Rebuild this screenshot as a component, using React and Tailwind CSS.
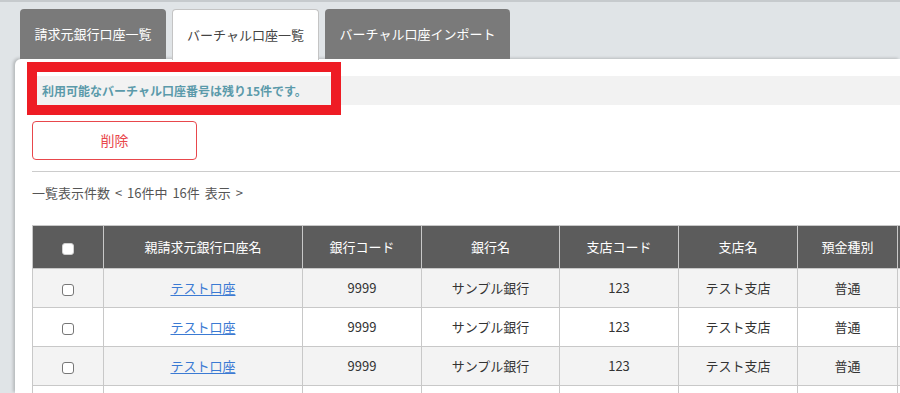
import React from "react";

const font = { fontFamily: '"Noto Sans CJK JP", "Noto Sans", sans-serif' };

function Box({ header }) {
  return (
    <span
      className={
        "inline-block w-[12px] h-[12px] rounded-[3px] align-middle " +
        (header ? "bg-white border border-[#d0d0d0]" : "bg-white border border-[#777]")
      }
    />
  );
}

const rows = [0, 1, 2];

export default function App() {
  return (
    <div
      className="w-[900px] h-[393px] overflow-hidden bg-[#e0e4e7] relative text-[13px]"
      style={font}
    >
      <div className="h-[2px] bg-[#c6cacd]" />
      <div className="flex gap-[6px] pl-[20px] pt-[7px] h-[57px] relative z-10">
        <div className="w-[146px] h-[50px] rounded-t-[4px] bg-[#7a7a7a] text-white flex items-center justify-center">
          請求元銀行口座一覧
        </div>
        <div className="w-[147px] h-[51px] rounded-t-[4px] bg-white border border-b-0 border-[#c4c4c4] text-[#444] flex items-center justify-center pb-[1px]">
          バーチャル口座一覧
        </div>
        <div className="w-[185px] h-[50px] rounded-t-[4px] bg-[#7a7a7a] text-white flex items-center justify-center">
          バーチャル口座インポート
        </div>
      </div>
      <div className="relative ml-[15px] bg-white rounded-tl-[6px] h-[334px] shadow-[-2px_-1px_3px_rgba(0,0,0,0.18)] pl-[17px] pt-[17px] overflow-hidden">
        <div className="h-[29px] bg-[#f2f2f2] flex items-center pl-[10px] text-[12px] font-bold text-[#5b9aaa]">
          利用可能なバーチャル口座番号は残り15件です。
        </div>
        <button className="mt-[16px] w-[165px] h-[39px] border border-[#e8474c] rounded-[4px] text-[#e8474c] text-[14px] bg-white flex items-center justify-center">
          削除
        </button>
        <div className="mt-[11px] border-t border-[#cccccc]" />
        <div className="pt-[11px] h-[53px] leading-[20px] text-[#555] [word-spacing:2px]">
          一覧表示件数 &lt; 16件中 16件 表示 &gt;
        </div>
        <table className="border-collapse table-fixed w-[1000px] text-[13px]">
          <colgroup>
            <col className="w-[71px]" />
            <col className="w-[199px]" />
            <col className="w-[119px]" />
            <col className="w-[138px]" />
            <col className="w-[119px]" />
            <col className="w-[119px]" />
            <col className="w-[100px]" />
            <col className="w-[135px]" />
          </colgroup>
          <thead>
            <tr className="h-[43px] bg-[#5c5c5c] text-white">
              <th className="border border-[#c8c8c8] font-normal"><Box header /></th>
              <th className="border border-[#c8c8c8] font-normal">親請求元銀行口座名</th>
              <th className="border border-[#c8c8c8] font-normal">銀行コード</th>
              <th className="border border-[#c8c8c8] font-normal">銀行名</th>
              <th className="border border-[#c8c8c8] font-normal">支店コード</th>
              <th className="border border-[#c8c8c8] font-normal">支店名</th>
              <th className="border border-[#c8c8c8] font-normal">預金種別</th>
              <th className="border border-[#c8c8c8] font-normal"></th>
            </tr>
          </thead>
          <tbody>
            {rows.map((i) => (
              <tr key={i} className={"h-[39px] text-[#333] text-center " + (i % 2 === 0 ? "bg-[#f3f3f3]" : "bg-white")}>
                <td className="border border-[#c8c8c8]"><Box /></td>
                <td className="border border-[#c8c8c8]">
                  <span className="text-[#3b7ad3] underline underline-offset-2">テスト口座</span>
                </td>
                <td className="border border-[#c8c8c8]">9999</td>
                <td className="border border-[#c8c8c8]">サンプル銀行</td>
                <td className="border border-[#c8c8c8]">123</td>
                <td className="border border-[#c8c8c8]">テスト支店</td>
                <td className="border border-[#c8c8c8]">普通</td>
                <td className="border border-[#c8c8c8]"></td>
              </tr>
            ))}
            <tr className="h-[39px] bg-white">
              <td className="border border-[#c8c8c8]"></td>
              <td className="border border-[#c8c8c8]"></td>
              <td className="border border-[#c8c8c8]"></td>
              <td className="border border-[#c8c8c8]"></td>
              <td className="border border-[#c8c8c8]"></td>
              <td className="border border-[#c8c8c8]"></td>
              <td className="border border-[#c8c8c8]"></td>
              <td className="border border-[#c8c8c8]"></td>
            </tr>
          </tbody>
        </table>
        <div className="absolute left-[12px] top-[3px] w-[314px] h-[53px] border-[10px] border-[#ee1c24] pointer-events-none" />
      </div>
    </div>
  );
}
